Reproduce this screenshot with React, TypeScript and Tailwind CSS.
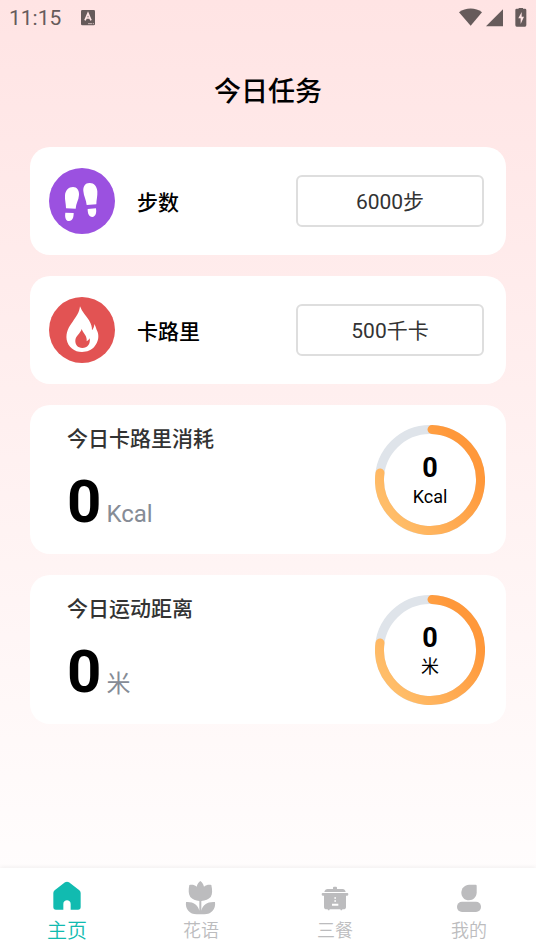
import React from "react";
import { clsx } from "clsx";

interface GoalCardProps {
  id: string;
  label: string;
  value: string;
  icon: React.ReactNode;
}

interface StatCardProps {
  id: string;
  title: string;
  value: number;
  unit: string;
}

interface NavItem {
  label: string;
  href: string;
  icon: React.ReactNode;
  active?: boolean;
}

function StepsIcon() {
  return (
    <svg viewBox="0 0 198 198" className="size-[66px] shrink-0" aria-hidden="true">
      <circle cx="99" cy="99" r="99" fill="#9b51e0" />
      <g fill="#fff">
        <path d="M72 57c12 0 19 10 18 24-1 16-9 25-10 41l-29-1c0-14-4-24-3-39 1-15 11-25 24-25z" />
        <path d="M49 134l25 1c0 13-3 24-14 24-10 0-13-11-11-25z" />
        <path d="M121 45c13-1 23 9 24 25 1 15-3 26-3 39l-29 2c-1-15-9-26-10-42-1-14 6-24 18-24z" />
        <path d="M116 123l25-2c2 14-1 25-11 26-11 0-14-11-14-24z" />
      </g>
    </svg>
  );
}

function FireIcon() {
  return (
    <svg viewBox="0 0 198 198" className="size-[66px] shrink-0" aria-hidden="true">
      <circle cx="99" cy="99" r="99" fill="#e25353" />
      <path
        d="M93 28c6 17 19 29 27 42 7 11 9 20 9 30 4-5 7-12 7-19 5 8 5 15 9 22 6 14 3 32-8 45-9 12-23 17-38 17-23 0-42-16-46-37-3-22 6-39 18-54 10-14 20-27 22-46z"
        fill="#fff"
      />
      <path
        d="M98 96c3 11 15 19 15 31v6c4-2 7-5 9-9 3 18-7 29-22 29-14 0-22-10-21-23 1-14 15-20 19-34z"
        fill="#e25353"
      />
    </svg>
  );
}

function HomeIcon() {
  return (
    <svg viewBox="0 0 102 102" className="size-[34px]" fill="currentColor" aria-hidden="true">
      <path d="M45 4q6-4 12 0l31 24q4 3 4 8v42q0 8-8 8H62V69c0-15-22-15-22 0v17H18q-8 0-8-8V36q0-5 4-8z" />
    </svg>
  );
}

function FlowerIcon() {
  return (
    <svg viewBox="0 0 102 102" className="size-[34px]" fill="currentColor" aria-hidden="true">
      <path d="M49 0c5 3 9 9 11 17 7-6 15-7 22-5 3 15 4 27-2 36-6 7-16 11-28 12v29c4-18 20-28 41-26 3 21-11 37-32 37H38C17 100 3 84 6 63c20-2 36 8 40 26V60c-11-1-21-5-27-12-6-9-6-21-3-36 8-2 15-1 22 5 2-8 6-14 11-17z" />
    </svg>
  );
}

function CookerIcon() {
  return (
    <svg viewBox="0 0 102 102" className="size-[34px]" fill="currentColor" aria-hidden="true">
      <path d="M45 20q0-3 3-3h6q3 0 3 3v4h17q7 0 9 9H19q2-9 10-9h16z" />
      <path d="M14 36h74q3 0 3 4t-3 4h-4v34q0 7-8 7h-3l-1 3h-4l-1-3H35l-1 3h-4l-1-3h-3q-8 0-8-7V44h-4q-3 0-3-4t3-4z" />
      <path d="M49 49h5v4h-5zm0 9h5v4h-5zm-7 10h19v6H42z" fill="#fff" />
    </svg>
  );
}

function ProfileIcon() {
  return (
    <svg viewBox="0 0 102 102" className="size-[34px]" fill="currentColor" aria-hidden="true">
      <path d="M51 11h20q3 0 3 3v20c0 14-10 24-23 24S28 48 28 35s10-24 23-24z" />
      <rect x="15" y="62" width="72" height="31" rx="15" />
    </svg>
  );
}

function StatusBar() {
  return (
    <div className="flex h-9 items-center justify-between px-[9px] text-[#665b5b]">
      <div className="flex items-center gap-5">
        <span className="pt-0.5 text-[21px]">11:15</span>
        <svg viewBox="0 0 42 48" className="h-4 w-[14px]" aria-hidden="true">
          <rect width="42" height="46" rx="4" fill="currentColor" />
          <path d="M12 31l9-21 9 21M15 24h12" fill="none" stroke="#ffe5e5" strokeWidth="5" />
          <path d="M21 41h12m2 0h4" stroke="#ffe5e5" strokeWidth="2" />
        </svg>
      </div>
      <svg viewBox="0 0 204 60" className="h-5 w-[68px]" fill="currentColor" aria-hidden="true">
        <path d="M0 13C20-2 50-2 69 13L35 53z" />
        <path d="M132 4v51H81z" />
        <path d="M173 2h6v-4h13v4h6q4 0 4 4v45q0 5-4 5h-25q-4 0-4-5V6q0-4 4-4z" />
        <path d="M188 12l-10 19h7v17l10-22h-7z" fill="#ffe5e5" />
      </svg>
    </div>
  );
}

function GoalCard({ id, label, value, icon }: GoalCardProps) {
  return (
    <section className="flex items-center rounded-[20px] bg-white py-7 pr-[22px] pl-[19px]">
      <div className="-my-2">{icon}</div>
      <h2 id={id} className="ml-[22px] pt-[3px] text-[21px] leading-7 font-medium text-black">
        {label}
      </h2>
      <button
        type="button"
        aria-describedby={id}
        className="ml-auto h-[52px] w-[188px] rounded-md border-2 border-[#dedede] pt-[3px] text-[21px] text-[#333]"
      >
        {value}
      </button>
    </section>
  );
}

function ProgressRing({ id, value, unit }: { id: string; value: number; unit: string }) {
  return (
    <div className="grid size-[110px] shrink-0 place-items-center">
      <svg viewBox="0 0 110 110" className="col-start-1 row-start-1 size-full" aria-hidden="true">
        <defs>
          <linearGradient id={id} x1="1" y1="0.2" x2="0.1" y2="0.8">
            <stop offset="0.15" stopColor="#ff983a" />
            <stop offset="1" stopColor="#ffbd69" />
          </linearGradient>
        </defs>
        <circle cx="55" cy="55" r="50.5" fill="none" stroke="#dfe4ea" strokeWidth="9" />
        <path
          d="M57 4.5A50.5 50.5 0 1 1 5 48"
          fill="none"
          stroke={`url(#${id})`}
          strokeWidth="9"
          strokeLinecap="round"
        />
      </svg>
      <div className="col-start-1 row-start-1 flex flex-col items-center pt-px text-black">
        <span className="text-[27px] leading-8 font-bold">{value}</span>
        <span className="text-lg leading-[26px]">{unit}</span>
      </div>
    </div>
  );
}

function StatCard({ id, title, value, unit }: StatCardProps) {
  return (
    <section className="flex items-center justify-between rounded-[20px] bg-white pt-5 pr-[21px] pb-[19px] pl-[37px]">
      <div>
        <h2 className="text-[21px] leading-7 font-medium text-[#333]">{title}</h2>
        <p className="mt-[14px] -mb-[2px] flex items-baseline gap-[5px] leading-[70px]">
          <span className="text-[60px] font-bold text-black">{value}</span>
          <span className="text-2xl leading-8 text-[#868c96]">{unit}</span>
        </p>
      </div>
      <ProgressRing id={id} value={value} unit={unit} />
    </section>
  );
}

const navItems: NavItem[] = [
  { label: "主页", href: "#home", icon: <HomeIcon />, active: true },
  { label: "花语", href: "#flowers", icon: <FlowerIcon /> },
  { label: "三餐", href: "#meals", icon: <CookerIcon /> },
  { label: "我的", href: "#profile", icon: <ProfileIcon /> },
];

function BottomNav() {
  return (
    <nav className="grid grid-cols-4 bg-white pt-[13px] shadow-[0_-1px_4px_rgba(0,0,0,0.06)]">
      {navItems.map((item) => (
        <a
          key={item.label}
          href={item.href}
          aria-current={item.active ? "page" : undefined}
          className={clsx("flex h-[71px] flex-col items-center", item.active ? "text-[#11bbb0]" : "text-[#bcbcbe]")}
        >
          {item.icon}
          <span className={clsx("leading-8 font-[350]", item.active ? "text-xl" : "text-lg")}>{item.label}</span>
        </a>
      ))}
    </nav>
  );
}

export default function App() {
  return (
    <div className="flex min-h-screen flex-col bg-linear-to-b from-[#ffe4e4] to-white font-[Roboto,'Noto_Sans_CJK_SC',sans-serif]">
      <StatusBar />
      <main className="flex flex-1 flex-col px-[30px] pb-6">
        <h1 className="mt-9 mb-[35px] text-center text-[27px] leading-10 font-medium text-black">今日任务</h1>
        <div className="flex flex-col gap-[21px]">
          <GoalCard id="goal-steps" label="步数" value="6000步" icon={<StepsIcon />} />
          <GoalCard id="goal-calories" label="卡路里" value="500千卡" icon={<FireIcon />} />
          <StatCard id="ring-calories" title="今日卡路里消耗" value={0} unit="Kcal" />
          <StatCard id="ring-distance" title="今日运动距离" value={0} unit="米" />
        </div>
      </main>
      <BottomNav />
    </div>
  );
}
